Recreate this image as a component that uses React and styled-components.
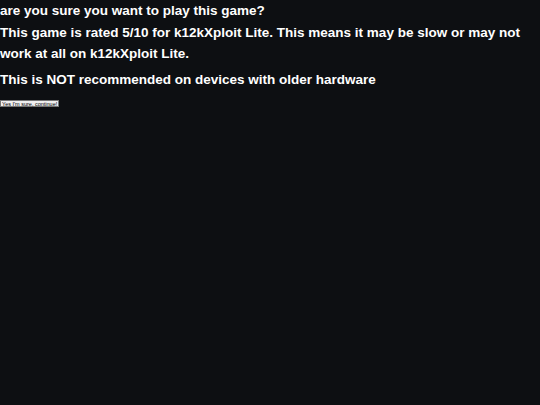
import React from 'react'
import styled, {createGlobalStyle} from 'styled-components'

const Global = createGlobalStyle`
html, body {
  margin: 0;
  padding: 0;
  background: #0d0f12;
}
body {
  font-family: 'Liberation Sans', Arial, sans-serif;
}
`

const Page = styled.div`
width: 540px;
height: 405px;
background: #0d0f12;
color: #ffffff;
overflow: hidden;
`
const Line = styled.p`
margin: 0;
margin-top: ${props => props.gap || 0}px;
font-size: 13.5px;
font-weight: 700;
line-height: 21px;
`
const Button = styled.button`
display: block;
margin-top: 10px;
padding: 0 1px;
height: 7px;
font-family: 'Liberation Sans', Arial, sans-serif;
font-size: 5.5px;
line-height: 6px;
color: #000;
background: #efefef;
border: 1px solid #767676;
border-radius: 0;
`

const App = () => {
  return (
    <Page>
      <Global />
      <Line>are you sure you want to play this game?</Line>
      <Line gap={1}>This game is rated 5/10 for k12kXploit Lite. This means it may be slow or may not work at all on k12kXploit Lite.</Line>
      <Line gap={5}>This is NOT recommended on devices with older hardware</Line>
      <Button>Yes I'm sure, continue!</Button>
    </Page>
  )
}

export default App
